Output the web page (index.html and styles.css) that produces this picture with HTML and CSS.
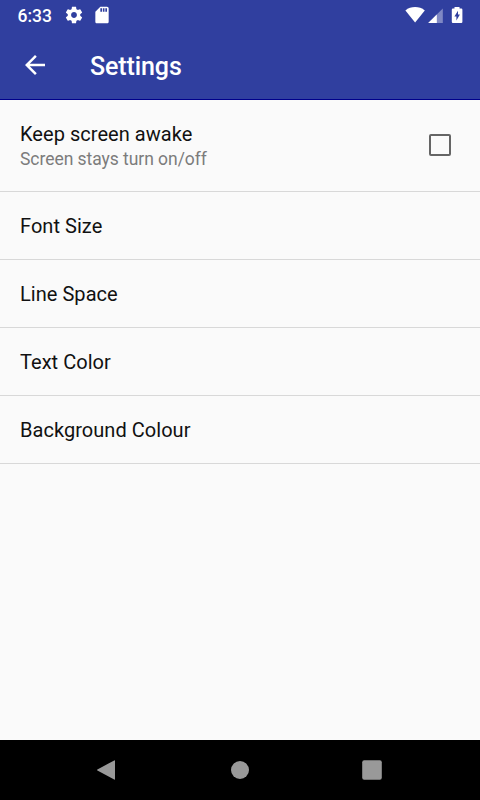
FILE: index.html
```html
<!DOCTYPE html>
<html lang="en">

<head>
	<meta charset="UTF-8">
	<meta name="viewport" content="width=device-width, initial-scale=1.0">
	<title>Settings</title>
	<link rel="stylesheet" href="styles.css">
</head>

<body>
	<header>
		<div class="status">
			<span class="time">6:33</span>
			<svg class="gear" width="20" height="20" viewBox="0 0 24 24">
				<path d="M19.43 12.98c.04-.32.07-.64.07-.98s-.03-.66-.07-.98l2.11-1.65c.19-.15.24-.42.12-.64l-2-3.46c-.12-.22-.39-.3-.61-.22l-2.49 1c-.52-.4-1.08-.73-1.69-.98l-.38-2.65C14.46 2.18 14.25 2 14 2h-4c-.25 0-.46.18-.49.42l-.38 2.65c-.61.25-1.17.59-1.69.98l-2.49-1c-.23-.09-.49 0-.61.22l-2 3.46c-.13.22-.07.49.12.64l2.11 1.65c-.04.32-.07.65-.07.98s.03.66.07.98l-2.11 1.65c-.19.15-.24.42-.12.64l2 3.46c.12.22.39.3.61.22l2.49-1c.52.4 1.08.73 1.69.98l.38 2.65c.03.24.24.42.49.42h4c.25 0 .46-.18.49-.42l.38-2.65c.61-.25 1.17-.59 1.69-.98l2.49 1c.23.09.49 0 .61-.22l2-3.46c.12-.22.07-.49-.12-.64l-2.11-1.65zM12 15.5c-1.93 0-3.5-1.57-3.5-3.5s1.57-3.5 3.5-3.5 3.5 1.57 3.5 3.5-1.57 3.5-3.5 3.5z"/>
			</svg>
			<svg class="sd" width="20" height="20" viewBox="0 0 24 24">
				<path d="M18 2h-8L4.02 8 4 20c0 1.1.9 2 2 2h12c1.1 0 2-.9 2-2V4c0-1.1-.9-2-2-2zm-6 6h-2V4h2v4zm3 0h-2V4h2v4zm3 0h-2V4h2v4z"/>
			</svg>
			<svg class="system" width="60" height="20" viewBox="0 0 60 20">
				<path d="M.4 5.4C6 1 14.2 1 19.8 5.4L10.1 17.4z"/>
				<path class="faded" d="M23.2 18L37.8 3.4V18z"/>
				<path d="M23.2 18L31.8 9.4V18z"/>
				<path fill-rule="evenodd" d="M49.5 2h5v1.6h1.8q1.1 0 1.1 1.2v12q0 1.2-1.1 1.2h-8.4q-1.1 0-1.1-1.2v-12q0-1.2 1.1-1.2h1.6zM53 5.7L49.4 11.4h2v4l3.5-5.9h-1.9z"/>
			</svg>
		</div>
		<div class="toolbar">
			<svg class="back" width="30" height="30" viewBox="0 0 24 24">
				<path d="M20 11H7.83l5.59-5.59L12 4l-8 8 8 8 1.41-1.41L7.83 13H20v-2z"/>
			</svg>
			<h1>Settings</h1>
		</div>
	</header>
	<main>
		<div class="row tall">
			<div>
				<div class="label">Keep screen awake</div>
				<div class="summary">Screen stays turn on/off</div>
			</div>
			<span class="checkbox"></span>
		</div>
		<div class="row"><div class="label">Font Size</div></div>
		<div class="row"><div class="label">Line Space</div></div>
		<div class="row"><div class="label">Text Color</div></div>
		<div class="row"><div class="label">Background Colour</div></div>
	</main>
	<nav>
		<svg width="24" height="24" viewBox="0 0 24 24">
			<path d="M18.2 2.4q.8-.5.8.5v18.2q0 1-.8.5L1.4 12.5q-.8-.5 0-1z"/>
		</svg>
		<svg width="24" height="24" viewBox="0 0 24 24">
			<circle cx="12" cy="12" r="9"/>
		</svg>
		<svg width="24" height="24" viewBox="0 0 24 24">
			<rect x="2.2" y="2.2" width="19.6" height="19.6" rx="2"/>
		</svg>
	</nav>
</body>

</html>
```
FILE: styles.css
```css
* {
	box-sizing: border-box;
}

body {
	margin: 0;
	height: 100vh;
	display: flex;
	flex-direction: column;
	font-family: Roboto, sans-serif;
	background: #fafafa;
	color: #111;
}

svg {
	display: block;
	fill: #fff;
}

header {
	height: 100px;
	background: #303f9f;
	border-bottom: 1px solid #00008b;
	color: #fff;
}

.status {
	display: flex;
	align-items: center;
	height: 30px;
	padding: 0 15px 0 17.5px;
}

.time {
	width: 46.5px;
	font-size: 17.5px;
	font-weight: 500;
	line-height: 30px;
	padding-top: 1px;
}

.sd {
	margin-left: 8px;
}

.system {
	margin-left: auto;
}

.faded {
	fill: #7f88c4;
}

.toolbar {
	display: flex;
	align-items: center;
	height: 70px;
	padding-left: 20px;
}

h1 {
	margin: 3px 0 0 40px;
	font-size: 25px;
	font-weight: 500;
	letter-spacing: -0.1px;
}

main {
	flex: 1;
}

.row {
	display: flex;
	align-items: center;
	justify-content: space-between;
	height: 68px;
	padding: 0 29px 0 20px;
	border-bottom: 1px solid #d8d8d8;
}

.tall {
	height: 92px;
	padding-top: 2px;
}

.label {
	font-size: 20px;
	line-height: 26px;
	letter-spacing: 0.04px;
}

.summary {
	font-size: 17.5px;
	line-height: 25px;
	letter-spacing: -0.05px;
	color: #7c7c7c;
}

.checkbox {
	width: 22px;
	height: 22px;
	margin-bottom: 3px;
	border: 2px solid #656565;
	border-radius: 2px;
}

nav {
	display: flex;
	align-items: center;
	justify-content: center;
	gap: 108px;
	height: 60px;
	background: #000;
}

nav svg {
	fill: #999;
}
```
